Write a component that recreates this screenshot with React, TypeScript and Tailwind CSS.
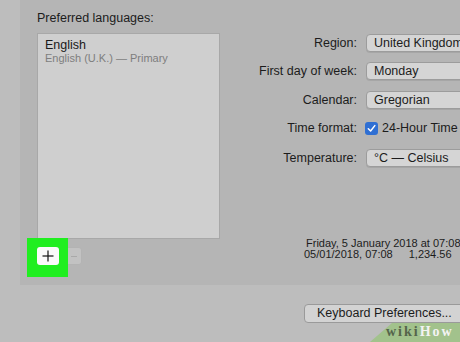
import React from "react";

const font = { fontFamily: '"Liberation Sans", Arial, sans-serif' };

function Popup({ children }: { children: React.ReactNode }) {
  return (
    <div className="ml-[9px] h-[18px] w-[140px] shrink-0 rounded-[4px] border border-[#9c9c9c] bg-[#d5d5d5] pl-[7px] text-[12.5px] leading-[16px] text-[#1c1c1c] shadow-[0_1px_0_rgba(0,0,0,0.08)] whitespace-nowrap">
      {children}
    </div>
  );
}

function Label({ children }: { children: React.ReactNode }) {
  return (
    <div className="w-[137px] shrink-0 text-right text-[12.5px] leading-[16px] text-[#1c1c1c] whitespace-nowrap">
      {children}
    </div>
  );
}

export default function App() {
  return (
    <div
      className="relative h-[342px] w-[460px] overflow-hidden bg-[#bdbdbd]"
      style={font}
    >
      <div className="ml-[20px] flex h-[285px] w-[460px] bg-[#b5b5b5]">
        {/* left column */}
        <div className="flex w-[200px] shrink-0 flex-col pl-[17px] pt-[10px]">
          <div className="text-[12.5px] leading-[16px] text-[#1c1c1c] whitespace-nowrap">
            Preferred languages:
          </div>
          <div className="mt-[7px] h-[206px] w-[183px] border border-[#a8a8a8] bg-[#cfcfcf] px-[7px] pt-[3px]">
            <div className="text-[12.5px] leading-[16px] text-[#1a1a1a]">English</div>
            <div className="mt-[-1px] text-[11px] leading-[13px] text-[#7e7e7e] whitespace-nowrap">
              English (U.K.) — Primary
            </div>
          </div>
          <div className="relative mt-[8px] flex">
            <div className="absolute left-[-10px] top-[-9px] h-[39px] w-[41px] bg-[#20ee20]" />
            <div className="relative z-10 flex h-[18px] w-[22px] items-center justify-center rounded-[3px] bg-[#fafafa]">
              <svg width="12" height="12" viewBox="0 0 12 12">
                <line x1="6" y1="0.5" x2="6" y2="11.5" stroke="#111" strokeWidth="1.2" />
                <line x1="0.5" y1="6" x2="11.5" y2="6" stroke="#111" strokeWidth="1.2" />
              </svg>
            </div>
            <div className="ml-[3px] flex h-[18px] w-[20px] items-center justify-center rounded-[3px] border border-[#b3b3b3] bg-[#c2c2c2]">
              <div className="ml-[4px] h-[1px] w-[6px] bg-[#a9a9a9]" />
            </div>
          </div>
        </div>

        {/* right column */}
        <div className="flex flex-col pt-[34px]">
          <div className="flex h-[18px] items-center">
            <Label>Region:</Label>
            <Popup>United Kingdom</Popup>
          </div>
          <div className="mt-[10px] flex h-[18px] items-center">
            <Label>First day of week:</Label>
            <Popup>Monday</Popup>
          </div>
          <div className="mt-[11px] flex h-[18px] items-center">
            <Label>Calendar:</Label>
            <Popup>Gregorian</Popup>
          </div>
          <div className="mt-[10px] flex h-[18px] items-center">
            <Label>Time format:</Label>
            <div className="ml-[8px] flex h-[13px] w-[13px] shrink-0 items-center justify-center rounded-[3px] bg-[#2f6fd3]">
              <svg width="9" height="9" viewBox="0 0 9 9">
                <path d="M1.3 4.8 L3.6 7 L7.8 1.6" fill="none" stroke="#fff" strokeWidth="1.5" strokeLinecap="round" strokeLinejoin="round" />
              </svg>
            </div>
            <div className="ml-[4px] text-[12.5px] leading-[16px] text-[#1c1c1c] whitespace-nowrap">
              24-Hour Time
            </div>
          </div>
          <div className="mt-[12px] flex h-[18px] items-center">
            <Label>Temperature:</Label>
            <Popup>°C — Celsius</Popup>
          </div>
          <div className="mt-[71px] flex flex-col text-[11px] leading-[11px] text-[#1c1c1c]">
            <div className="pl-[86px] whitespace-nowrap">Friday, 5 January 2018 at 07:08:00</div>
            <div className="flex pl-[84px] whitespace-nowrap">
              <span>05/01/2018, 07:08</span>
              <span className="ml-[16px]">1,234.56</span>
            </div>
          </div>
        </div>
      </div>

      <div className="flex pl-[304px] pt-[19px]">
        <div className="h-[19px] w-[180px] shrink-0 rounded-[4px] border border-[#9a9a9a] bg-[#d3d3d3] pl-[12px] text-[12.5px] leading-[17px] text-[#1c1c1c] whitespace-nowrap">
          Keyboard Preferences...
        </div>
      </div>

      {/* watermark */}
      <svg
        className="absolute bottom-0 right-0"
        width="90"
        height="19"
        viewBox="0 0 90 19"
      >
        <polygon points="22,0 90,0 90,19 0,19" fill="#a2c28c" />
      </svg>
      <div
        className="absolute left-[386px] top-[325px] text-[14px] font-bold leading-[14px] tracking-[2px] whitespace-nowrap"
        style={{ fontFamily: '"Liberation Serif", "Times New Roman", serif' }}
      >
        <span className="text-[#55654b]">wiki</span>
        <span className="text-[#f3f3f3]">How</span>
      </div>
    </div>
  );
}
